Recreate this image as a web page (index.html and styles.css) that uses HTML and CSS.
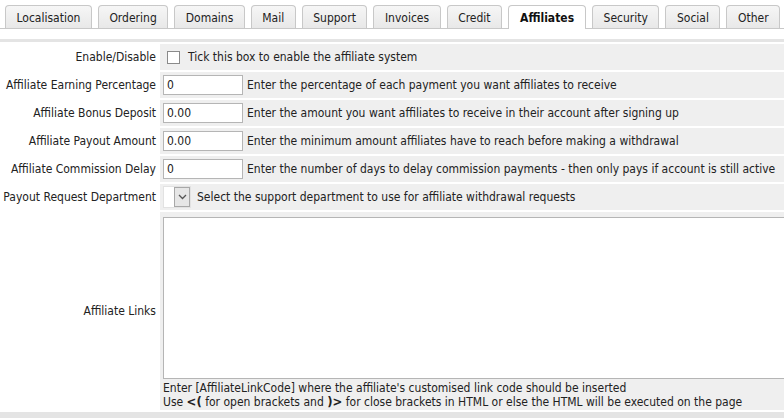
FILE: index.html
```html
<!DOCTYPE html>
<html>
<head>
<meta charset="utf-8">
<link rel="stylesheet" href="styles.css">
</head>
<body>
<div class="page">
  <div class="tabs">
    <div class="tab">Localisation</div>
    <div class="tab">Ordering</div>
    <div class="tab">Domains</div>
    <div class="tab">Mail</div>
    <div class="tab">Support</div>
    <div class="tab">Invoices</div>
    <div class="tab">Credit</div>
    <div class="tab active">Affiliates</div>
    <div class="tab">Security</div>
    <div class="tab">Social</div>
    <div class="tab">Other</div>
  </div>
  <div class="band"></div>
  <div class="form">
    <div class="label">Enable/Disable</div>
    <div class="field"><span class="check"></span><span class="help">Tick this box to enable the affiliate system</span></div>

    <div class="label">Affiliate Earning Percentage</div>
    <div class="field"><span class="input">0</span><span class="help">Enter the percentage of each payment you want affiliates to receive</span></div>

    <div class="label">Affiliate Bonus Deposit</div>
    <div class="field"><span class="input">0.00</span><span class="help">Enter the amount you want affiliates to receive in their account after signing up</span></div>

    <div class="label">Affiliate Payout Amount</div>
    <div class="field"><span class="input">0.00</span><span class="help">Enter the minimum amount affiliates have to reach before making a withdrawal</span></div>

    <div class="label">Affiliate Commission Delay</div>
    <div class="field"><span class="input">0</span><span class="help">Enter the number of days to delay commission payments - then only pays if account is still active</span></div>

    <div class="label">Payout Request Department</div>
    <div class="field"><span class="select"><span class="select-btn"><svg width="9" height="6" viewBox="0 0 9 6"><path d="M1 1 L4.5 4.5 L8 1" fill="none" stroke="#555" stroke-width="1.3"/></svg></span></span><span class="help">Select the support department to use for affiliate withdrawal requests</span></div>

    <div class="label label-tall">Affiliate Links</div>
    <div class="field tall">
      <div class="textarea"></div>
      <div class="note">Enter [AffiliateLinkCode] where the affiliate's customised link code should be inserted</div>
      <div class="note">Use <b>&lt;(</b> for open brackets and <b>)&gt;</b> for close brackets in HTML or else the HTML will be executed on the page</div>
    </div>
  </div>
  <div class="band bottom"></div>
</div>
</body>
</html>
```
FILE: styles.css
```css
html, body {
  margin: 0;
  padding: 0;
  background: #fff;
  overflow: hidden;
}
body {
  font-family: "DejaVu Sans Condensed", "DejaVu Sans", sans-serif;
  font-size: 12px;
  color: #222;
}
.page {
  width: 1000px;
}
.tabs {
  display: flex;
  align-items: flex-end;
  gap: 6px;
  padding: 5px 0 0 5px;
  height: 23px;
  border-bottom: 1px solid #c8c8c8;
}
.tab {
  box-sizing: border-box;
  height: 23px;
  padding: 0 10.5px;
  line-height: 24px;
  font-size: 12px;
  color: #222;
  border: 1px solid #c8c8c8;
  border-bottom: none;
  border-radius: 4px 4px 0 0;
  background: linear-gradient(#f6f6f6, #e8e8e8);
}
.tab.active {
  height: 24px;
  margin-bottom: -1px;
  background: #fff;
  font-weight: bold;
  color: #111;
  padding: 0 11px;
}
.band {
  margin-top: 10px;
  height: 3px;
  background: #e4e4e4;
}
.band.bottom {
  margin-top: 2px;
  height: 8px;
}
.form {
  display: grid;
  grid-template-columns: 160px 1fr;
  row-gap: 2px;
  padding-top: 2px;
}
.label {
  padding-right: 4px;
  display: flex;
  align-items: center;
  justify-content: flex-end;
  height: 26px;
}
.label.label-tall {
  height: auto;
}
.field {
  background: #efefef;
  height: 26px;
  display: flex;
  align-items: center;
  padding-left: 3px;
}
.help {
  margin-left: 4px;
}
.input {
  box-sizing: border-box;
  width: 80px;
  height: 20px;
  background: #fff;
  border: 1px solid #b5b5b5;
  padding-left: 3px;
  line-height: 18px;
}
.check {
  box-sizing: border-box;
  width: 13px;
  height: 13px;
  margin-left: 4px;
  margin-right: 4px;
  background: #fff;
  border: 1px solid #8a8a8a;
}
.select {
  box-sizing: border-box;
  display: flex;
  justify-content: flex-end;
  width: 28px;
  height: 22px;
  background: #fff;
  border: 1px solid #e2e2e2;
  margin-right: 2px;
}
.select-btn {
  box-sizing: border-box;
  width: 16px;
  height: 20px;
  border: 1px solid #a8a8a8;
  background: #e6e6e6;
  display: flex;
  align-items: center;
  justify-content: center;
}
.field.tall {
  height: auto;
  display: block;
  padding: 5px 0 1px 3px;
}
.textarea {
  box-sizing: border-box;
  height: 162px;
  background: #fff;
  border: 1px solid #b5b5b5;
  margin-bottom: 2px;
}
.note {
  line-height: 14px;
  font-size: 12px;
}
.note b {
  font-size: 13px;
}
```
